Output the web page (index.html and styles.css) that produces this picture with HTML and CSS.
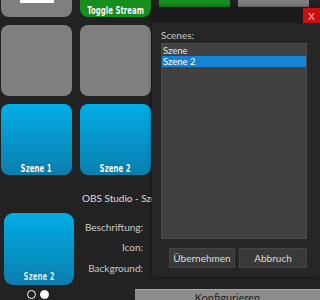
FILE: index.html
```html
<!DOCTYPE html>
<html lang="de">
<head>
    <meta charset="UTF-8">
    <title>Deck Konfiguration</title>
    <link rel="stylesheet" href="styles.css">
</head>
<body>
    <div class="screen">
        <div class="grid">
            <div class="tile gray"><div class="icon"></div></div>
            <div class="tile green"><span class="label">Toggle Stream</span></div>
            <div class="tile green"></div>
            <div class="tile gray"></div>

            <div class="tile gray"></div>
            <div class="tile gray"></div>
            <div class="tile gray"></div>
            <div class="tile gray"></div>

            <div class="tile blue"><span class="label">Szene 1</span></div>
            <div class="tile blue"><span class="label">Szene 2</span></div>
            <div class="tile blue"></div>
            <div class="tile blue"></div>
        </div>

        <div class="editor">
            <div class="preview">
                <div class="tile blue big"><span class="label">Szene 2</span></div>
                <div class="dots">
                    <span class="dot"></span>
                    <span class="dot active"></span>
                </div>
            </div>
            <div class="fields">
                <div class="title">OBS Studio - Szene wechseln</div>
                <div class="field">Beschriftung:</div>
                <div class="field">Icon:</div>
                <div class="field">Background:</div>
                <button class="configure">Konfigurieren</button>
            </div>
        </div>

        <div class="dialog">
            <div class="titlebar">
                <button class="close">X</button>
            </div>
            <div class="dialog-body">
                <div class="list-label">Scenes:</div>
                <ul class="list">
                    <li>Szene</li>
                    <li class="selected">Szene 2</li>
                </ul>
                <div class="actions">
                    <button class="btn">Übernehmen</button>
                    <button class="btn">Abbruch</button>
                </div>
            </div>
        </div>
    </div>
</body>
</html>
```

FILE: styles.css
```css
body {
    margin: 0;
    background-color: #222;
    font-family: Lato, "Noto Sans", sans-serif;
    color: #ccc;
}

.screen {
    position: relative;
    width: 320px;
    height: 300px;
    overflow: hidden;
}

.grid {
    display: grid;
    grid-template-columns: repeat(4, 71px);
    grid-auto-rows: 71px;
    gap: 8px;
    margin-top: -54px;
    padding-left: 1px;
}

.tile {
    display: flex;
    flex-direction: column;
    justify-content: flex-end;
    align-items: center;
    border-radius: 8px;
    overflow: hidden;
}

.tile.gray {
    background-color: #7f7f7f;
}

.tile.green {
    background-color: #168f1e;
}

.tile.blue {
    background: linear-gradient(#02ade6, #0a7eae);
}

.icon {
    width: 34px;
    height: 57px;
    margin-bottom: 14px;
    background-color: #fff;
}

.label {
    display: inline-block;
    font-family: "DejaVu Sans", sans-serif;
    font-weight: bold;
    font-size: 10px;
    line-height: 12px;
    color: #fff;
    white-space: nowrap;
    transform: scaleX(0.7);
    text-shadow: 0 0 1px rgba(0, 0, 0, 0.5);
}

.tile.green .label {
    margin-bottom: 0;
}

.tile.blue .label {
    margin-bottom: 0;
}

.editor {
    display: flex;
    margin-top: 17px;
}

.preview {
    display: flex;
    flex-direction: column;
    align-items: center;
    width: 70px;
    padding-top: 21px;
    margin-left: 4px;
}

.tile.big {
    width: 70px;
    height: 72px;
    border-radius: 9px;
}

.tile.big .label {
    color: #d8f2ff;
    margin-bottom: 2px;
}

.dots {
    display: flex;
    gap: 4px;
    margin-top: 5px;
    margin-right: 3px;
}

.dot {
    width: 7px;
    height: 7px;
    border: 1px solid #fff;
    border-radius: 50%;
}

.dot.active {
    background-color: #fff;
}

.fields {
    display: flex;
    flex-direction: column;
    width: 246px;
}

.title {
    font-size: 10px;
    line-height: 12px;
    margin-left: 8px;
    color: #ddd;
    white-space: nowrap;
}

.field {
    width: 69px;
    text-align: right;
    font-size: 10px;
    line-height: 12px;
    color: #ccc;
}

.field:nth-child(2) {
    margin-top: 17px;
}

.field:nth-child(3) {
    margin-top: 8px;
}

.field:nth-child(4) {
    margin-top: 9px;
}

.configure {
    margin: 15px 0 0 61px;
    width: 185px;
    height: 16px;
    padding: 0;
    border: none;
    border-top: 1px solid #aaa;
    background-color: #8c8c8c;
    color: #222;
    font-family: inherit;
    font-size: 11px;
    line-height: 12px;
}

.dialog {
    position: absolute;
    left: 152px;
    top: 7px;
    width: 168px;
    height: 270px;
    background-color: #262626;
    box-shadow: 0 0 4px rgba(0, 0, 0, 0.5);
}

.titlebar {
    display: flex;
    justify-content: flex-end;
    height: 16px;
    background-color: #1b1b1b;
}

.close {
    width: 17px;
    height: 15px;
    margin-top: 1px;
    padding: 0;
    border: none;
    background-color: #c80f0f;
    color: #f3c9c9;
    font-family: inherit;
    font-size: 10px;
}

.dialog-body {
    padding: 6px 13px 0 9px;
}

.list-label {
    font-size: 10px;
    line-height: 12px;
    color: #ccc;
}

.list {
    list-style: none;
    margin: 2px 0 0 0;
    padding: 1px 0;
    height: 192px;
    background-color: #414141;
    border: 1px solid #4a4a4a;
}

.list li {
    font-size: 9.5px;
    line-height: 11px;
    padding-left: 1px;
    color: #e6e6e6;
}

.list li.selected {
    background-color: #1583d6;
    color: #fff;
}

.actions {
    display: flex;
    justify-content: flex-end;
    gap: 4px;
    margin-top: 9px;
}

.btn {
    height: 20px;
    padding: 0;
    border: 1px solid #444;
    background-color: #393939;
    color: #ddd;
    font-family: inherit;
    font-size: 10px;
}

.btn:first-child {
    width: 66px;
}

.btn:last-child {
    width: 68px;
}
```
